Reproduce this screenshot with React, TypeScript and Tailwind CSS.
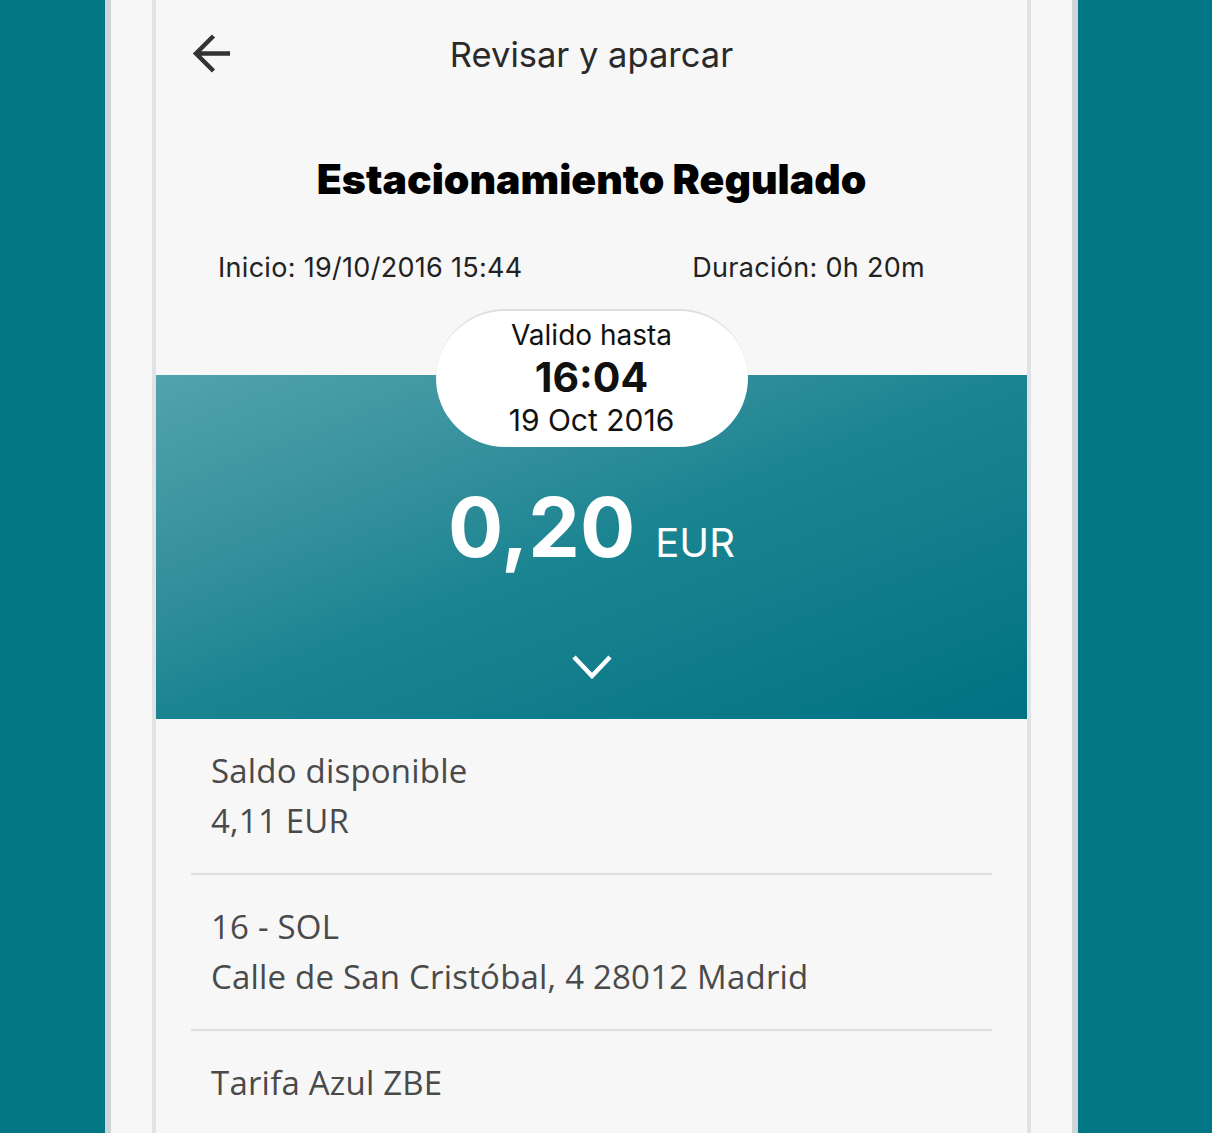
export default function App() {
  const items = [
    { top: "Saldo disponible", bottom: "4,11 EUR" },
    { top: "16 - SOL", bottom: "Calle de San Cristóbal, 4 28012 Madrid" },
    { top: "Tarifa Azul ZBE", bottom: "" },
  ];

  return (
    <div className="h-[1133px] overflow-hidden bg-[#017685] pl-[105px]">
      <div className="h-full w-[973px] border-x-[6px] border-[#cdd5d8] bg-[#f7f7f7] px-[41px]">
        <div className="flex h-full flex-col border-x-4 border-[#dfe3e6] bg-[#f7f7f7] font-['Inter',sans-serif]">
          {/* header */}
          <div className="relative flex h-[110px] items-center justify-center">
            <button className="absolute left-[36px] top-[34px] h-[40px] w-[40px]">
              <svg viewBox="0 0 40 40" className="h-[40px] w-[40px]">
                <path
                  d="M38 19.5H4M21.5 2L4 19.5 21.5 37"
                  fill="none"
                  stroke="#333"
                  strokeWidth="4.5"
                />
              </svg>
            </button>
            <h1 className="text-[34.5px] text-[#2a2a2a]">Revisar y aparcar</h1>
          </div>

          <h2 className="mt-[46px] text-center text-[41px] font-black leading-[46px] text-black">
            Estacionamiento Regulado
          </h2>

          <div className="mt-[50px] flex justify-between pl-[62px] pr-[102px] text-[27px] leading-[32px] tracking-[0.3px] text-[#222]">
            <span>Inicio: 19/10/2016 15:44</span>
            <span>Duración: 0h 20m</span>
          </div>

          {/* valid until pill */}
          <div className="relative z-10 mt-[25px] flex h-[138px] w-[312px] flex-col items-center self-center rounded-full border-t-2 border-[#dedede] bg-white pt-[7px] text-[#111]">
            <span className="text-[28px] leading-[34px]">Valido hasta</span>
            <span className="text-[41px] font-bold leading-[50px]">16:04</span>
            <span className="text-[30px] leading-[36px]">19 Oct 2016</span>
          </div>

          {/* amount banner */}
          <div className="-mt-[72px] flex h-[344px] flex-col items-center bg-linear-to-br from-[#52a3ad] via-[#1a8491] to-[#007283] pt-[72px] text-white">
            <div className="mt-[39px] flex h-[84px] items-baseline gap-[20px]">
              <span className="text-[82px] font-bold leading-[84px]">0,20</span>
              <span className="text-[40px] leading-[40px]">EUR</span>
            </div>
            <svg viewBox="0 0 40 26" className="mt-[84px] h-[26px] w-[40px]">
              <path d="M2 3l18 19L38 3" fill="none" stroke="#fff" strokeWidth="4.5" />
            </svg>
          </div>

          {/* details list */}
          <div className="px-[35px] font-['Open_Sans',sans-serif] text-[33px] font-medium leading-[50px] tracking-[0.2px] text-[#4a4a4a]">
            {items.map((it, i) => (
              <div
                key={i}
                className={
                  i < items.length - 1
                    ? "border-b-2 border-[#dedede] pb-[27px] pl-[20px] pt-[27px]"
                    : "pl-[20px] pt-[27px]"
                }
              >
                <div>{it.top}</div>
                {it.bottom && <div>{it.bottom}</div>}
              </div>
            ))}
          </div>
        </div>
      </div>
    </div>
  );
}
